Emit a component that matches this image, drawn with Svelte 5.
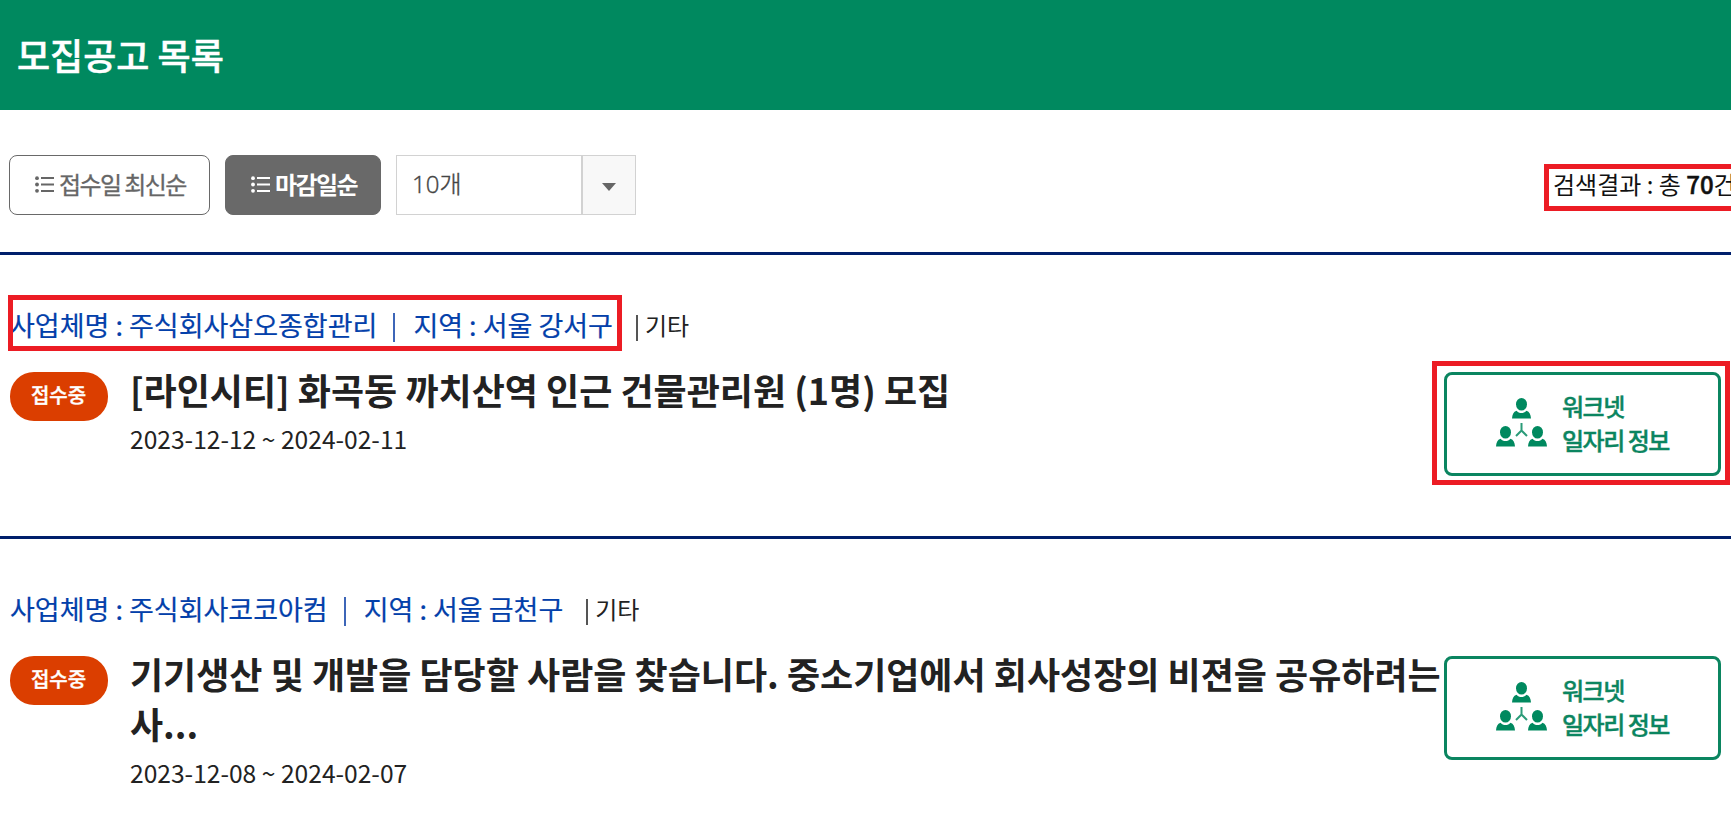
<script lang="ts">
	interface Posting {
		company: string;
		region: string;
		category: string;
		title: string;
		period: string;
		marked: boolean;
	}

	const total = 70;

	const postings: Posting[] = [
		{
			company: '주식회사삼오종합관리',
			region: '서울 강서구',
			category: '기타',
			title: '[라인시티] 화곡동 까치산역 인근 건물관리원 (1명) 모집',
			period: '2023-12-12 ~ 2024-02-11',
			marked: true
		},
		{
			company: '주식회사코코아컴',
			region: '서울 금천구',
			category: '기타',
			title: '기기생산 및 개발을 담당할 사람을 찾습니다. 중소기업에서 회사성장의 비젼을 공유하려는 사...',
			period: '2023-12-08 ~ 2024-02-07',
			marked: false
		}
	];
</script>

{#snippet listIcon()}
	<svg class="list-icon" viewBox="0 0 19 17" width="19" height="17" aria-hidden="true">
		<g fill="currentColor">
			<circle cx="2" cy="2.2" r="1.9" />
			<circle cx="2" cy="8.5" r="1.9" />
			<circle cx="2" cy="14.8" r="1.9" />
			<path d="M6 1h13v2H6zM6 7.5h13v2H6zM6 14h13v2H6z" />
		</g>
	</svg>
{/snippet}

{#snippet person(x: number, y: number)}
	<g transform="translate({x} {y})">
		<ellipse cx="9.5" cy="6.3" rx="5.5" ry="6.3" />
		<path d="M0 20.6c.3-4 1.500-6.800 4.500-7.800 1.300 1.600 3 2.300 5 2.300s3.700-.7 5-2.300c3 1 4.200 3.800 4.500 7.800z" />
	</g>
{/snippet}

<header class="page-header">
	<h1>모집공고 목록</h1>
</header>

<div class="toolbar">
	<button class="sort">{@render listIcon()}접수일 최신순</button>
	<button class="sort active">{@render listIcon()}마감일순</button>
	<div class="select">
		<span class="value">10개</span>
		<span class="arrow">
			<svg viewBox="0 0 14 8" width="14" height="8"><path d="M0 0h14L7 8z" fill="#666" /></svg>
		</span>
	</div>
	<p class="result">검색결과 : 총 <strong>{total}</strong>건</p>
</div>

<ul class="postings">
	{#each postings as posting}
		<li>
			<p class="meta">
				<span class="info" class:marked={posting.marked}
					><span>사업체명 : {posting.company}</span><i class="bar"></i><span
						>지역 : {posting.region}</span
					></span
				><i class="bar dark"></i><span class="category">{posting.category}</span>
			</p>
			<div class="body">
				<span class="badge">접수중</span>
				<div class="text">
					<h2>{posting.title}</h2>
					<p class="period">{posting.period}</p>
				</div>
				<a class="worknet" class:marked={posting.marked} href="#worknet">
					<svg viewBox="0 0 51 49" width="51" height="49" fill="#00895f" aria-hidden="true">
						{@render person(16, 0)}
						{@render person(0, 28)}
						{@render person(32, 28)}
						<path d="M25.500 25v7.500L20 38M25.500 32.500 31 38" fill="none" stroke="#2b9b78" stroke-width="2" />
					</svg>
					<span>워크넷<br />일자리 정보</span>
				</a>
			</div>
		</li>
	{/each}
</ul>

<style>
	:global(body) {
		overflow: hidden;
		background: #fff;
		color: #222;
		font-family: 'Noto Sans CJK KR', sans-serif;
	}

	h1,
	h2,
	p,
	ul {
		margin: 0;
		padding: 0;
	}

	.page-header {
		display: flex;
		align-items: center;
		box-sizing: border-box;
		height: 110px;
		padding: 0 0 2px 17px;
		background: #00895f;
	}

	h1 {
		color: #fff;
		font-size: 36px;
		font-weight: 500;
		line-height: 52px;
		-webkit-text-stroke: 0.5px;
	}

	.toolbar {
		display: flex;
		height: 60px;
		padding: 45px 0 37px 9px;
		overflow: hidden;
	}

	.sort {
		display: flex;
		align-items: center;
		flex: none;
		box-sizing: border-box;
		width: 201px;
		margin: 0 15px 0 0;
		padding: 0 0 2px 25px;
		border: 1px solid #696969;
		border-radius: 8px;
		background: #fff;
		color: #666;
		font: 400 24px/36px 'Noto Sans CJK KR', sans-serif;
		letter-spacing: -1.6px;
		white-space: nowrap;
		-webkit-text-stroke: 0.3px;
	}

	.sort.active {
		width: 156px;
		background: #696969;
		color: #fff;
		font-weight: 700;
		-webkit-text-stroke: 0;
	}

	.list-icon {
		flex: none;
		margin: 1px 5px 0 0;
	}

	.select {
		display: flex;
		flex: none;
		box-sizing: border-box;
		width: 240px;
		border: 1px solid #d2d2d2;
	}

	.value {
		flex: 1;
		padding-left: 15px;
		color: #444;
		font: 300 24px/56px 'Open Sans', 'Noto Sans CJK KR', sans-serif;
		-webkit-text-stroke: 0.4px;
	}

	.arrow {
		display: flex;
		align-items: center;
		justify-content: center;
		width: 52px;
		padding-top: 3px;
		border-left: 2px solid #d2d2d2;
		background: #f8f8f8;
	}

	.result {
		flex: none;
		box-sizing: border-box;
		width: 200px;
		height: 47px;
		margin: 9px -13px 0 auto;
		padding-left: 4px;
		border: 5px solid #ec1c24;
		color: #111;
		font-size: 24px;
		line-height: 30px;
		white-space: nowrap;
	}

	.result strong {
		font-weight: 500;
		-webkit-text-stroke: 0.5px;
	}

	.postings {
		list-style: none;
	}

	li {
		box-sizing: border-box;
		height: 284px;
		padding: 53px 10px 0;
		border-top: 3px solid #001f6b;
	}

	.meta {
		display: flex;
		align-items: center;
		height: 36px;
		font-size: 24px;
	}

	.category {
		line-height: 34px;
		padding-bottom: 2px;
	}

	.info {
		display: flex;
		align-items: center;
		position: relative;
		color: #0340aa;
		font-size: 27px;
		line-height: 34px;
		padding-bottom: 2px;
		white-space: nowrap;
		-webkit-text-stroke: 0.2px;
	}

	.bar {
		width: 2px;
		height: 29px;
		margin: 5px 18px 0 16px;
		background: #3d66b8;
	}

	.bar.dark {
		height: 26px;
		margin: 4px 7px 0 23px;
		background: #555;
	}

	/* emphasis frames sit around the element without moving it */
	.marked {
		position: relative;
	}

	.marked::after {
		content: '';
		position: absolute;
		border: 5px solid #ec1c24;
	}

	.info.marked::after {
		inset: -13px -9px -7px -2px;
	}

	.worknet.marked::after {
		inset: -14px -12px -12px -15px;
	}

	.body {
		display: flex;
		align-items: flex-start;
		margin-top: 28px;
	}

	.badge {
		flex: none;
		width: 97px;
		height: 49px;
		padding-right: 1px;
		border-radius: 24px;
		background: #db3e00;
		color: #fff;
		font-size: 20px;
		font-weight: 500;
		line-height: 46px;
		text-align: center;
		-webkit-text-stroke: 0.4px;
	}

	.text {
		flex: 1;
		margin: -8px 0 0 22px;
	}

	h2 {
		font-size: 36px;
		font-weight: 700;
		line-height: 50px;
	}

	.period {
		font-size: 24.600px;
		line-height: 48px;
	}

	.worknet {
		display: flex;
		align-items: center;
		flex: none;
		box-sizing: border-box;
		width: 277px;
		height: 104px;
		padding: 0 0 3px 49px;
		border: 3px solid #0b8560;
		border-radius: 8px;
		color: #0b8560;
		font-size: 24px;
		font-weight: 500;
		line-height: 34px;
		letter-spacing: -1.5px;
		text-decoration: none;
		white-space: nowrap;
		-webkit-text-stroke: 0.4px;
	}

	.worknet svg {
		flex: none;
		margin: 0 15px 1px 0;
	}
</style>
